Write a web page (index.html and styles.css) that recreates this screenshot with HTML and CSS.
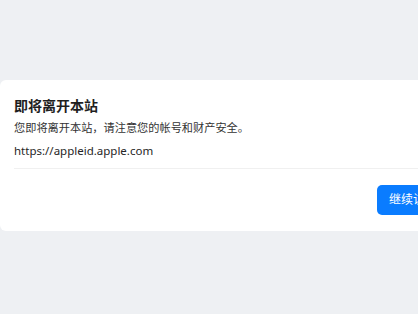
FILE: index.html
```html
<!DOCTYPE html>
<html>
<head>
  <title>即将离开本站</title>
  <link rel="stylesheet" href="styles.css">
</head>
<body>
  <div class="dialog">
    <h3 class="dialog-title">即将离开本站</h3>
    <p class="dialog-text">您即将离开本站，请注意您的帐号和财产安全。</p>
    <p class="dialog-link">https://appleid.apple.com</p>
    <div class="dialog-footer">
      <a class="btn-primary" href="#">继续访问</a>
    </div>
  </div>
</body>
</html>
```

FILE: styles.css
```css
body {
  margin: 0;
  padding-top: 80px;
  background-color: #eef0f3;
  font-family: "Noto Sans", "Noto Sans CJK SC", sans-serif;
  color: #262626;
  overflow: hidden;
}

.dialog {
  width: 435px;
  padding: 16px 14px 16px 14px;
  background-color: #ffffff;
  border-radius: 6px;
}

.dialog-title {
  margin: 0;
  font-size: 14px;
  line-height: 20px;
  font-weight: bold;
  color: #1f1f1f;
}

.dialog-text {
  margin: 4px 0 0 0;
  font-size: 11.2px;
  line-height: 16px;
  color: #333333;
}

.dialog-link {
  margin: 7px 0 0 0;
  font-size: 11.5px;
  line-height: 16px;
  padding-bottom: 9px;
  border-bottom: 1px solid #f0f0f0;
  color: #262626;
}

.dialog-footer {
  display: flex;
  justify-content: flex-end;
  margin-top: 16px;
}

.btn-primary {
  display: inline-block;
  height: 30px;
  line-height: 30px;
  padding: 0 12px;
  font-size: 12px;
  color: #ffffff;
  background-color: #0a7cff;
  border-radius: 5px;
  text-decoration: none;
}
```
